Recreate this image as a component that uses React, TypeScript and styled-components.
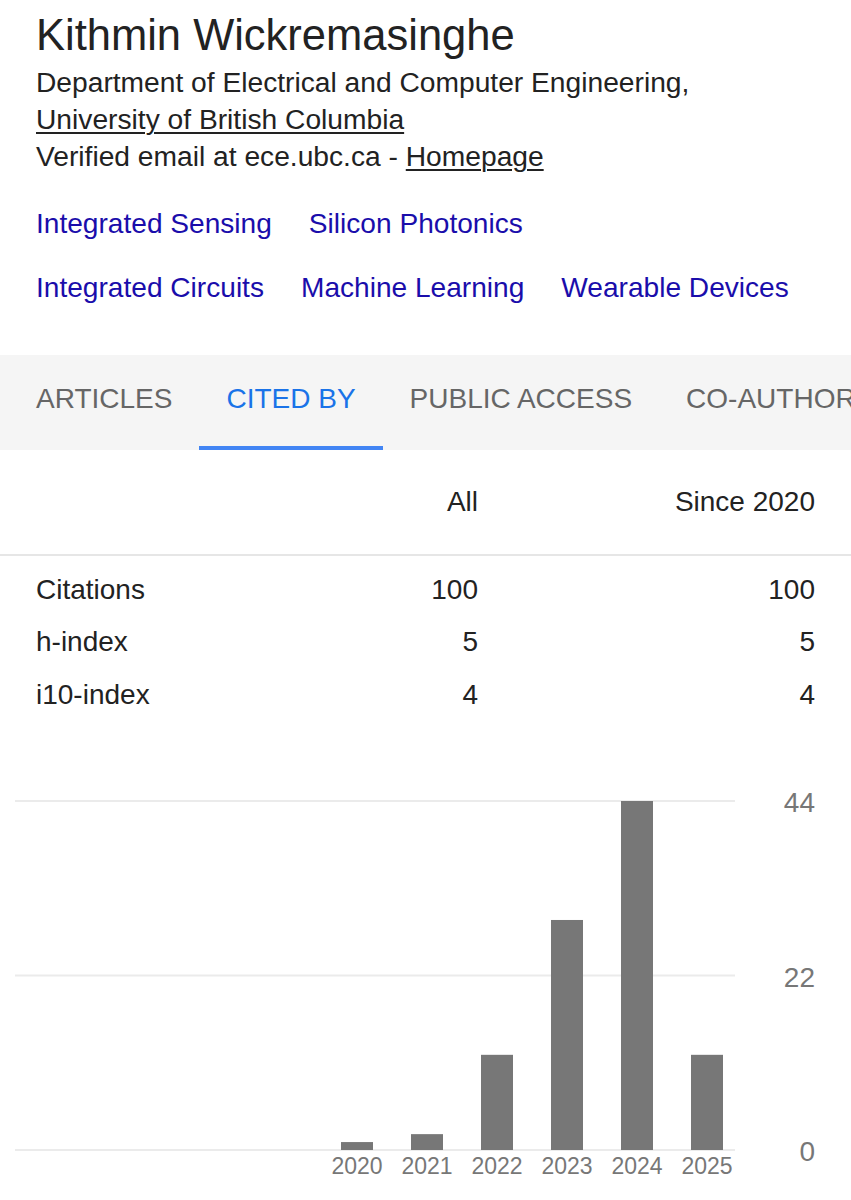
import React from 'react'
import styled, {createGlobalStyle} from "styled-components"

const GlobalStyle = createGlobalStyle`
    html, body {
        margin: 0;
        padding: 0;
        background: #fff;
    }
    body {
        font-family: "Liberation Sans", Arial, Helvetica, sans-serif;
        color: #222;
    }
`

const interestRows = [
    ["Integrated Sensing", "Silicon Photonics"],
    ["Integrated Circuits", "Machine Learning", "Wearable Devices"],
]

const tabs = ["ARTICLES", "CITED BY", "PUBLIC ACCESS", "CO-AUTHORS"]

const stats = [
    {label: "Citations", all: 100, since: 100},
    {label: "h-index", all: 5, since: 5},
    {label: "i10-index", all: 4, since: 4},
]

const citations = [
    {year: 2020, count: 1},
    {year: 2021, count: 2},
    {year: 2022, count: 12},
    {year: 2023, count: 29},
    {year: 2024, count: 44},
    {year: 2025, count: 12},
]

function CitationChart() {
    const top = 41
    const base = 390
    const max = 44
    const scale = (base - top) / max
    const firstCenter = 357
    const step = 70
    const barW = 32
    const ticks = [
        {v: 44, y: top},
        {v: 22, y: (top + base) / 2},
        {v: 0, y: base},
    ]

    return (
        <ChartSvg width={851} height={440} viewBox="0 0 851 440">
            {ticks.map(t => (
                <g key={t.v}>
                    <line x1={15} x2={735} y1={t.y} y2={t.y} stroke="#ebebeb" strokeWidth={2}/>
                    <text x={815} y={t.y + 11} textAnchor="end" className="tick">{t.v}</text>
                </g>
            ))}
            {citations.map((c, i) => {
                const cx = firstCenter + i * step
                const h = c.count * scale
                return (
                    <g key={c.year}>
                        <rect x={cx - barW / 2} y={base - h} width={barW} height={h} fill="#777"/>
                        <text x={cx} y={414} textAnchor="middle" className="year">{c.year}</text>
                    </g>
                )
            })}
        </ChartSvg>
    )
}

function App() {
    return (
        <Page>
            <GlobalStyle/>
            <Profile>
                <Name>Kithmin Wickremasinghe</Name>
                <Affiliation>
                    Department of Electrical and Computer Engineering,<br/>
                    <UnderLink>University of British Columbia</UnderLink>
                </Affiliation>
                <Affiliation>
                    Verified email at ece.ubc.ca - <UnderLink>Homepage</UnderLink>
                </Affiliation>
                <Interests>
                    {interestRows.map((row, i) => (
                        <InterestRow key={i}>
                            {row.map(name => <Interest key={name}>{name}</Interest>)}
                        </InterestRow>
                    ))}
                </Interests>
            </Profile>

            <TabBar>
                {tabs.map(t => (
                    <Tab key={t} $active={t === "CITED BY"}>{t}</Tab>
                ))}
            </TabBar>

            <StatsHeader>
                <span/>
                <HeadCell>All</HeadCell>
                <HeadCell>Since 2020</HeadCell>
            </StatsHeader>
            <StatsBody>
                {stats.map(s => (
                    <StatRow key={s.label}>
                        <span>{s.label}</span>
                        <NumCell>{s.all}</NumCell>
                        <NumCell>{s.since}</NumCell>
                    </StatRow>
                ))}
            </StatsBody>

            <CitationChart/>
        </Page>
    )
}

export default App

const Page = styled.div`
    width: 851px;
    height: 1200px;
    overflow: hidden;
    background: #fff;
`

const Profile = styled.div`
    padding: 10px 36px 0 36px;
`

const Name = styled.div`
    font-size: 43.5px;
    line-height: 50px;
    color: #222;
    margin-bottom: 3.7px;
`

const Affiliation = styled.div`
    font-size: 28.2px;
    line-height: 37px;
    color: #222;
`

const UnderLink = styled.a`
    color: #222;
    text-decoration: underline;
    text-decoration-thickness: 2px;
    text-underline-offset: 3px;
    cursor: pointer;
`

const Interests = styled.div`
    margin-top: 30px;
    display: flex;
    flex-direction: column;
    gap: 27px;
`

const InterestRow = styled.div`
    display: flex;
    gap: 37px;
    white-space: nowrap;
`

const Interest = styled.a`
    font-size: 28.1px;
    line-height: 37px;
    color: #1a0dab;
    text-decoration: none;
    cursor: pointer;
`

const TabBar = styled.div`
    margin-top: 49px;
    height: 95px;
    background: #f5f5f5;
    display: flex;
    padding-left: 9px;
    overflow: hidden;
    white-space: nowrap;
`

const Tab = styled.div<{ $active?: boolean }>`
    flex: none;
    padding: 0 27px 8px 27px;
    font-size: 28px;
    line-height: 87px;
    color: ${p => p.$active ? "#1a73e8" : "#666"};
    border-bottom: ${p => p.$active ? "4px solid #4285f4" : "4px solid transparent"};
    box-sizing: border-box;
    height: 95px;
`

const StatsHeader = styled.div`
    display: grid;
    grid-template-columns: 242px 200px 337px;
    padding: 33px 36px 34px 36px;
    border-bottom: 2px solid #e6e6e6;
    font-size: 28px;
    line-height: 37px;
`

const HeadCell = styled.span`
    text-align: right;
    color: #222;
`

const StatsBody = styled.div`
    padding: 8px 36px 0 36px;
`

const StatRow = styled.div`
    display: grid;
    grid-template-columns: 242px 200px 337px;
    font-size: 28px;
    line-height: 52.5px;
    color: #222;
`

const NumCell = styled.span`
    text-align: right;
`

const ChartSvg = styled.svg`
    display: block;
    margin-top: 38.5px;
    .tick {
        font-family: "Liberation Sans", Arial, sans-serif;
        font-size: 28px;
        fill: #777;
    }
    .year {
        font-family: "Liberation Sans", Arial, sans-serif;
        font-size: 23px;
        fill: #777;
    }
`
